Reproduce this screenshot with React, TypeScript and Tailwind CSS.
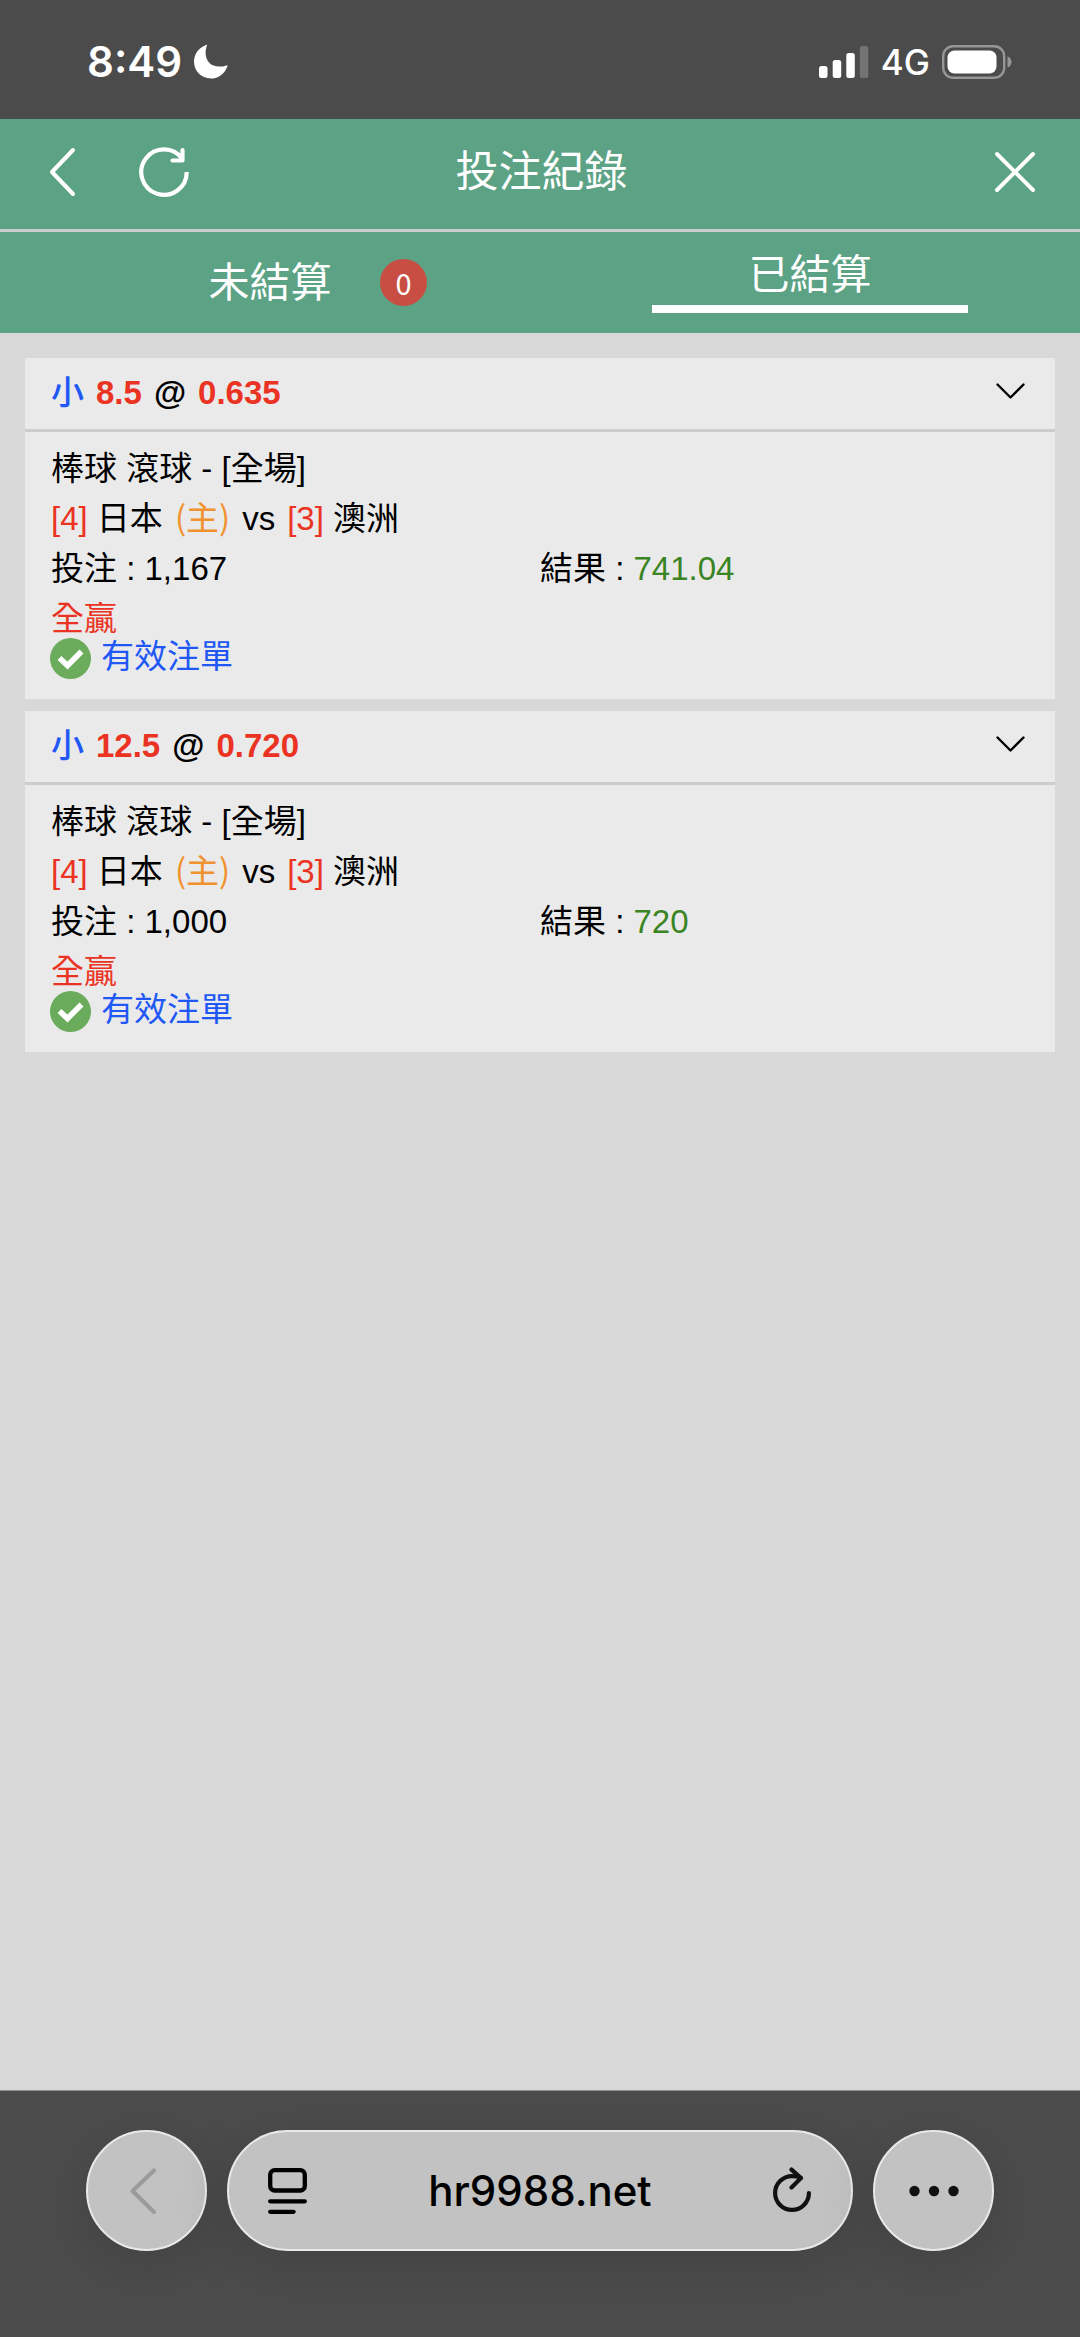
import React from "react";

type Bet = {
  id: number;
  line: string;
  odds: string;
  stake: string;
  result: string;
};

const bets: Bet[] = [
  { id: 1, line: "8.5", odds: "0.635", stake: "1,167", result: "741.04" },
  { id: 2, line: "12.5", odds: "0.720", stake: "1,000", result: "720" },
];

function StatusBar() {
  return (
    <div className="flex h-[119px] items-center justify-between bg-[#4b4b4b] pl-[87px] pr-[68px] pt-1 font-['Inter',sans-serif] text-white">
      <div className="flex items-center gap-[11px]">
        <span className="text-[42px] font-semibold leading-[44px]">8:49</span>
        <svg className="h-[35px] w-[35px]" viewBox="0 0 35 35" fill="currentColor" aria-hidden="true">
          <path d="M13 .9c.5-.3 1.1.2.9.8C13 4.2 12.6 6.6 12.6 8.800 12.6 17.300 18 22.600 26.200 22.600c2.600 0 4.800-.4 7.300-1.200.6-.2 1.200.3.9 1C31.700 29.700 25.400 34.500 17.800 34.500 8.200 34.500 1 27.200 1 17.600 1 10.100 5.700 3.500 13 .9Z" />
        </svg>
      </div>
      <div className="flex items-center">
        <svg className="h-8 w-[50px]" viewBox="0 0 50 32" fill="currentColor" aria-hidden="true">
          <rect x="0" y="20" width="8.5" height="12" rx="2.5" />
          <rect x="13.7" y="14" width="8.5" height="18" rx="2.5" />
          <rect x="27.3" y="7" width="8.5" height="25" rx="2.5" />
          <rect x="40.8" y="0" width="8.5" height="32" rx="2.5" fill="#737373" />
        </svg>
        <span className="ml-3 text-[35px] font-medium leading-[40px]">4G</span>
        <svg className="ml-3 h-[34px] w-[70px]" viewBox="0 0 70 34" aria-hidden="true">
          <rect x="1.2" y="1.2" width="61" height="31.6" rx="10" fill="none" stroke="#969696" strokeWidth="2.4" />
          <rect x="5.5" y="5.5" width="49" height="23" rx="7" fill="#fff" />
          <path d="M65.500 11.500c2.600.7 4 3 4 5.500s-1.400 4.800-4 5.500Z" fill="#969696" />
        </svg>
      </div>
    </div>
  );
}

function PageHeader() {
  return (
    <header className="flex h-[113px] items-center border-b-[3px] border-[#c9cdcb] pb-1 pl-[46px] pr-[43px] text-white">
      <div className="flex flex-1 items-center gap-[58px]">
        <button type="button" aria-label="返回" className="flex h-14 w-8 items-center justify-center">
          <svg className="h-[52px] w-8" viewBox="0 0 32 52" fill="none" stroke="currentColor" strokeWidth="4" strokeLinecap="round" strokeLinejoin="round">
            <path d="M27 4 6 26l21 22" />
          </svg>
        </button>
        <button type="button" aria-label="重新整理" className="flex h-14 w-14 items-center justify-center">
          <svg className="h-[54px] w-[54px]" viewBox="0 0 54 54" fill="none" stroke="currentColor" strokeWidth="4.2" strokeLinejoin="round">
            <path d="M49.700 27A22.700 22.700 0 1 1 45.500 14" />
            <path d="M45.500 5v10.500h-10" strokeLinecap="round" />
          </svg>
        </button>
      </div>
      <h1 className="text-[43px] leading-[60px]">投注紀錄</h1>
      <div className="flex flex-1 justify-end">
        <button type="button" aria-label="關閉" className="flex h-11 w-11 items-center justify-center">
          <svg className="h-11 w-11" viewBox="0 0 44 44" fill="none" stroke="currentColor" strokeWidth="4" strokeLinecap="round">
            <path d="m4 4 36 36M40 4 4 40" />
          </svg>
        </button>
      </div>
    </header>
  );
}

function Tabs() {
  return (
    <nav className="grid h-[101px] grid-cols-2 text-[41px] leading-[58px] text-white">
      <button type="button" className="relative flex items-center justify-center">
        未結算
        <span className="absolute left-[380px] flex h-[47px] w-[47px] items-center justify-center rounded-full bg-[#c84d42] font-['Noto_Sans_CJK_TC',sans-serif] text-[29px] leading-none">
          0
        </span>
      </button>
      <button type="button" aria-current="page" className="flex flex-col items-center justify-end pb-5">
        <span className="mb-px">已結算</span>
        <span className="h-2 w-[316px] bg-white" />
      </button>
    </nav>
  );
}

function BetCard({ bet }: { bet: Bet }) {
  return (
    <article className="bg-[#eaeaea] text-[33px] leading-[38px] text-black">
      <button
        type="button"
        aria-label="收合注單"
        className="flex h-[74px] w-full items-start justify-between border-b-[3px] border-[#cccccc] pl-[26px] pr-[29px] pt-4 font-bold"
      >
        <span className="flex gap-3">
          <span className="font-medium text-[#2158f5]">小</span>
          <span className="text-[#eb3323]">{bet.line}</span>
          <span>@</span>
          <span className="text-[#eb3323]">{bet.odds}</span>
        </span>
        <svg className="mt-2 h-[18px] w-[31px]" viewBox="0 0 31 18" fill="none" stroke="currentColor" strokeWidth="2.4" strokeLinecap="round" strokeLinejoin="round" aria-hidden="true">
          <path d="m2.500 2.500 13 13 13-13" />
        </svg>
      </button>
      <div className="px-[26px] pb-5 pt-[18px]">
        <div className="flex flex-col gap-3">
          <p>棒球 滾球 - [全場]</p>
          <p>
            <span className="text-[#eb3323]">[4]</span> 日本
            <span className="mx-3 font-['Noto_Sans_CJK_TC',sans-serif] leading-none text-[#f0922f]">(主)</span>
            vs
            <span className="ml-3 text-[#eb3323]">[3]</span> 澳洲
          </p>
          <div className="grid grid-cols-2">
            <p>投注 : {bet.stake}</p>
            <p>
              結果 : <span className="text-[#3a8423]">{bet.result}</span>
            </p>
          </div>
          <p className="text-[#eb3323]">全贏</p>
        </div>
        <p className="flex items-start gap-[10px] text-[#2158f5]">
          <svg className="-ml-px h-[41px] w-[41px]" viewBox="0 0 41 41" aria-hidden="true">
            <circle cx="20.5" cy="20.5" r="20.5" fill="#6aac5c" />
            <path d="m9.500 20 8 7.500L31.500 13.500" fill="none" stroke="#fff" strokeWidth="5.6" />
          </svg>
          有效注單
        </p>
      </div>
    </article>
  );
}

const glass =
  "flex h-[121px] shrink-0 items-center rounded-full border-2 border-[#e9e9e9] bg-[#c2c2c2] shadow-[0_14px_60px_rgba(0,0,0,0.14)]";

function BrowserBar() {
  return (
    <footer className="flex h-[247px] items-start gap-5 border-t border-[#8f9491] bg-[#4c4c4c] px-[86px] pt-[39px] text-black">
      <button type="button" aria-label="上一頁" disabled className={`${glass} w-[121px] justify-center text-[#9b9b9b]`}>
        <svg className="mr-2 h-[50px] w-[30px]" viewBox="0 0 30 50" fill="none" stroke="currentColor" strokeWidth="4.2" strokeLinecap="round" strokeLinejoin="round">
          <path d="M26 4.500 4.500 25 26 46" />
        </svg>
      </button>
      <div className={`${glass} min-w-0 flex-1 justify-between pl-[39px] pr-10`}>
        <button type="button" aria-label="頁面選單">
          <svg className="h-[46px] w-[39px]" viewBox="0 0 39 46" fill="none" stroke="currentColor" strokeWidth="4.3" strokeLinecap="round">
            <rect x="2.2" y="2.2" width="34.6" height="20.3" rx="4.5" />
            <path d="M2.200 33.300h34.600M2.200 43.800h23.400" />
          </svg>
        </button>
        <a href="#" className="font-['Inter',sans-serif] text-[42px] font-medium leading-[52px]">
          hr9988.net
        </a>
        <button type="button" aria-label="重新載入">
          <svg className="h-12 w-[38px]" viewBox="0 0 38 48" fill="none" stroke="#111" strokeWidth="4.2" strokeLinecap="round" strokeLinejoin="round">
            <path d="M35.900 26A16.900 16.900 0 1 1 19 9.100c3 0 6 .5 8.500 1.500" />
            <path d="m18.500 2.600 9.500 8.500-9.500 9.500" />
          </svg>
        </button>
      </div>
      <button type="button" aria-label="更多" className={`${glass} w-[121px] justify-center`}>
        <svg className="h-3 w-[50px]" viewBox="0 0 50 12" fill="#111">
          <circle cx="5.5" cy="6" r="5.2" />
          <circle cx="25" cy="6" r="5.2" />
          <circle cx="44.5" cy="6" r="5.2" />
        </svg>
      </button>
    </footer>
  );
}

export default function App() {
  return (
    <div className="flex min-h-screen flex-col bg-[#d8d8d8] font-['Liberation_Sans','Noto_Sans_CJK_TC',sans-serif]">
      <StatusBar />
      <div className="bg-[#5ca284]">
        <PageHeader />
        <Tabs />
      </div>
      <main className="flex flex-1 flex-col gap-3 px-[25px] pt-[25px]">
        {bets.map((bet) => (
          <BetCard key={bet.id} bet={bet} />
        ))}
      </main>
      <BrowserBar />
    </div>
  );
}
